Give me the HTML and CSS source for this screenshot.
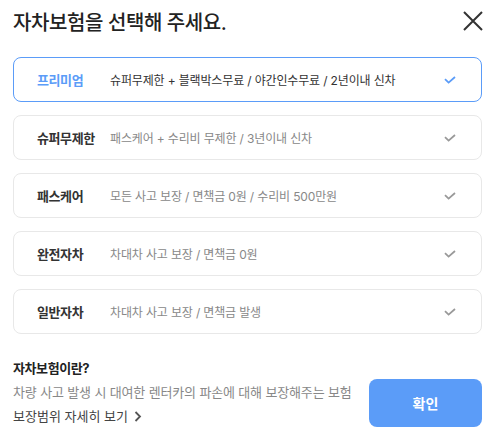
FILE: index.html
```html
<!DOCTYPE html>
<html lang="ko">
<head>
    <meta charset="UTF-8">
    <meta name="viewport" content="width=device-width, initial-scale=1.0">
    <title>자차보험 선택</title>
    <link rel="stylesheet" href="styles.css">
</head>
<body>
    <div class="modal">
        <!-- 헤더 -->
        <div class="head">
            <h1 class="title">자차보험을 선택해 주세요.</h1>
            <button class="btn-close" aria-label="닫기">
                <svg width="20" height="20" viewBox="0 0 20 20">
                    <path d="M1 1 L19 19 M19 1 L1 19" stroke="#333" stroke-width="2" fill="none"/>
                </svg>
            </button>
        </div>

        <!-- 보험 목록 -->
        <ul class="plans">
            <li class="plan on">
                <span class="name">프리미엄</span>
                <span class="desc">슈퍼무제한 + 블랙박스무료 / 야간인수무료 / 2년이내 신차</span>
                <svg class="check" width="12" height="8" viewBox="0 0 12 8"><path d="M1 3.2 L4.6 6.6 L11 1" /></svg>
            </li>
            <li class="plan">
                <span class="name">슈퍼무제한</span>
                <span class="desc">패스케어 + 수리비 무제한 / 3년이내 신차</span>
                <svg class="check" width="12" height="8" viewBox="0 0 12 8"><path d="M1 3.2 L4.6 6.6 L11 1" /></svg>
            </li>
            <li class="plan">
                <span class="name">패스케어</span>
                <span class="desc">모든 사고 보장 / 면책금 0원 / 수리비 500만원</span>
                <svg class="check" width="12" height="8" viewBox="0 0 12 8"><path d="M1 3.2 L4.6 6.6 L11 1" /></svg>
            </li>
            <li class="plan">
                <span class="name">완전자차</span>
                <span class="desc">차대차 사고 보장 / 면책금 0원</span>
                <svg class="check" width="12" height="8" viewBox="0 0 12 8"><path d="M1 3.2 L4.6 6.6 L11 1" /></svg>
            </li>
            <li class="plan">
                <span class="name">일반자차</span>
                <span class="desc">차대차 사고 보장 / 면책금 발생</span>
                <svg class="check" width="12" height="8" viewBox="0 0 12 8"><path d="M1 3.2 L4.6 6.6 L11 1" /></svg>
            </li>
        </ul>

        <!-- 하단 -->
        <div class="foot">
            <div class="info">
                <p class="info-title">자차보험이란?</p>
                <p class="info-desc">차량 사고 발생 시 대여한 렌터카의 파손에 대해 보장해주는 보험</p>
                <a class="info-link" href="#">보장범위 자세히 보기
                    <svg width="8" height="11" viewBox="0 0 8 11"><path d="M1.5 1 L6 5.5 L1.5 10" /></svg>
                </a>
            </div>
            <button class="btn-ok">확인</button>
        </div>
    </div>
</body>
</html>
```

FILE: styles.css
```css
*{
    box-sizing: border-box;
}
body{
    margin: 0;
    background: #fff;
    font-family: Inter, "Noto Sans CJK KR", sans-serif;
    color: #333;
}
.modal{
    padding: 0 14px 0 13px;
}

.head{
    display: flex;
    align-items: center;
    justify-content: space-between;
    height: 42px;
    margin-bottom: 15px;
}
.title{
    margin: 0;
    font-size: 20px;
    font-weight: 500;
    letter-spacing: -0.4px;
    color: #222;
}
.btn-close{
    border: 0;
    background: none;
    padding: 0;
    margin-right: -1px;
    width: 20px;
    height: 20px;
    display: flex;
}

.plans{
    list-style: none;
    margin: 0;
    padding: 0;
    display: flex;
    flex-direction: column;
    gap: 13px;
}
.plan{
    display: flex;
    align-items: center;
    height: 45px;
    padding: 0 25px 0 23px;
    border: 1px solid #e8e8e8;
    border-radius: 8px;
}
.plan .name{
    width: 73px;
    flex-shrink: 0;
    font-size: 13px;
    font-weight: 700;
    letter-spacing: -0.4px;
    color: #333;
}
.plan .desc{
    flex: 1;
    font-size: 12px;
    letter-spacing: -0.15px;
    color: #888;
}
.plan .check{
    fill: none;
    stroke: #999;
    stroke-width: 1.8;
}
.plan.on{
    border-color: #5b9cf8;
}
.plan.on .name{
    color: #5b9cf8;
}
.plan.on .desc{
    color: #333;
}
.plan.on .check{
    stroke: #5b9cf8;
}

.foot{
    display: flex;
    align-items: flex-end;
    justify-content: space-between;
    margin-top: 22px;
}
.info p{
    margin: 0;
}
.info-title{
    font-size: 13px;
    font-weight: 700;
    line-height: 24px;
    letter-spacing: -0.4px;
    color: #222;
}
.info-desc{
    font-size: 13px;
    line-height: 24px;
    letter-spacing: -0.15px;
    color: #888;
}
.info-link{
    display: inline-flex;
    align-items: center;
    gap: 6px;
    font-size: 13px;
    line-height: 25px;
    letter-spacing: 0;
    color: #444;
    text-decoration: none;
}
.info-link svg{
    fill: none;
    stroke: #555;
    stroke-width: 1.8;
}
.btn-ok{
    width: 113px;
    height: 48px;
    margin-bottom: 2px;
    border: 0;
    border-radius: 8px;
    background: #5b9cf8;
    color: #fff;
    font-family: inherit;
    font-size: 14px;
    font-weight: 700;
}
```
